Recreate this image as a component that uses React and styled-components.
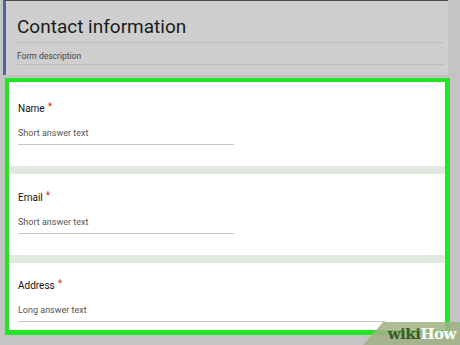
import React from "react";
import styled, { createGlobalStyle } from "styled-components";

const Global = createGlobalStyle`
  html, body { margin: 0; padding: 0; background: #c3c3c3; }
  body { font-family: Roboto, "Noto Sans", Arial, sans-serif; }
`;

const Page = styled.div`
  position: relative;
  width: 460px;
  height: 345px;
  overflow: hidden;
  background: #c4c4c4;
  display: flex;
  flex-direction: column;
`;

const HeaderCard = styled.div`
  margin-left: 3px;
  width: 445px;
  height: 75px;
  box-sizing: border-box;
  background: #cfcfcf;
  border-top: 1px solid #44523f;
  border-left: 3px solid #4766a3;
  padding: 0 4px 0 11px;
  display: flex;
  flex-direction: column;
`;

const Title = styled.div`
  font-size: 19px;
  line-height: 22px;
  color: #1b1b1b;
  margin-top: 15px;
  padding-bottom: 4px;
  border-bottom: 1px solid #bdbdbd;
`;

const Description = styled.div`
  font-size: 8.5px;
  line-height: 10px;
  color: #444;
  padding: 8px 0 3px;
  border-bottom: 1px solid #bdbdbd;
`;

const Frame = styled.div`
  margin-top: 3px;
  margin-left: 5px;
  width: 445px;
  box-sizing: border-box;
  border: 4px solid #22e622;
  border-right-width: 5px;
  border-bottom-width: 5px;
  background: #fff;
  display: flex;
  flex-direction: column;
`;

const Card = styled.div`
  height: ${(p) => p.$h}px;
  box-sizing: border-box;
  padding: ${(p) => p.$top}px 0 0 9px;
  background: #fff;
`;

const Separator = styled.div`
  height: 8px;
  background: #dfe9dd;
`;

const Label = styled.div`
  font-size: 10px;
  line-height: 12px;
  font-weight: 400;
  color: #111;
`;

const Star = styled.span`
  color: #d2302a;
  margin-left: 3px;
  position: relative;
  top: -2px;
`;

const Answer = styled.div`
  width: ${(p) => p.$w}px;
  margin-top: 13px;
  font-size: 9px;
  line-height: 11px;
  color: #555;
  padding-bottom: 5px;
  border-bottom: 1px solid #c6c6c6;
`;

const Watermark = styled.div`
  position: absolute;
  right: 0;
  bottom: 0;
  width: 97px;
  height: 23px;
  background: rgba(160, 178, 132, 0.85);
  clip-path: polygon(20px 0, 100% 0, 100% 100%, 0 100%);
  display: flex;
  align-items: center;
  justify-content: flex-end;
  padding-right: 4px;
  box-sizing: border-box;
  font-family: "DejaVu Serif", "Liberation Serif", serif;
  font-weight: bold;
  font-size: 15px;
  letter-spacing: -0.5px;
`;

const Wiki = styled.span`
  color: #3c5a2a;
`;

const How = styled.span`
  color: #fff;
`;

const questions = [
  { label: "Name", answer: "Short answer text", w: 216, h: 84, top: 21 },
  { label: "Email", answer: "Short answer text", w: 216, h: 81, top: 18 },
  { label: "Address", answer: "Long answer text", w: 367, h: 67, top: 17 },
];

export default function App() {
  return (
    <>
      <Global />
      <Page>
        <HeaderCard>
          <Title>Contact information</Title>
          <Description>Form description</Description>
        </HeaderCard>
        <Frame>
          {questions.map((q, i) => (
            <React.Fragment key={q.label}>
              {i > 0 && <Separator />}
              <Card $h={q.h} $top={q.top}>
                <Label>
                  {q.label}
                  <Star>*</Star>
                </Label>
                <Answer $w={q.w}>{q.answer}</Answer>
              </Card>
            </React.Fragment>
          ))}
        </Frame>
        <Watermark>
          <Wiki>wiki</Wiki>
          <How>How</How>
        </Watermark>
      </Page>
    </>
  );
}
